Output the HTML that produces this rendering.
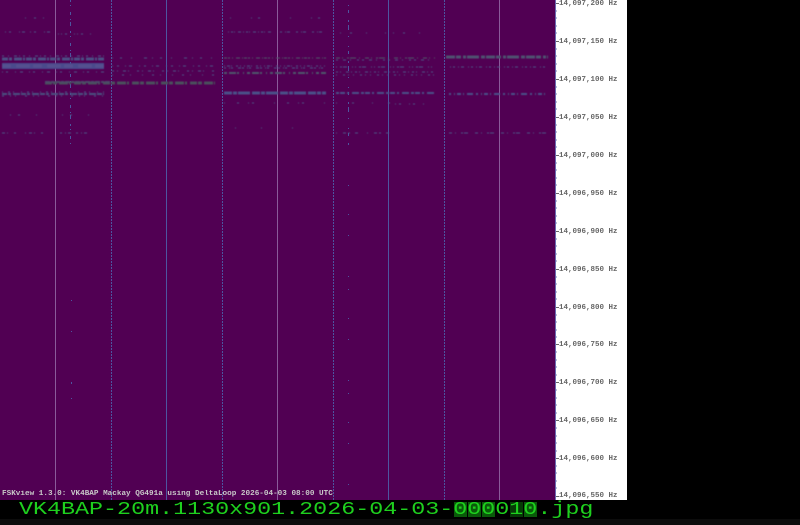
<!DOCTYPE html>
<html><head><meta charset="utf-8"><style>
html,body{margin:0;padding:0;width:800px;height:525px;overflow:hidden;background:#000}
#wf{position:absolute;left:0;top:0;width:555px;height:500px;background:#510053}
#panel{position:absolute;left:555px;top:0;width:72px;height:500px;background:#fff}
.l{position:absolute;left:559px;font:bold 7.5px/8px "Liberation Mono",monospace;color:#666;white-space:pre;filter:blur(.25px)}
#cap{position:absolute;left:2px;top:490px;font:bold 7.66px/8px "Liberation Mono",monospace;color:#c8c8c8;white-space:pre;filter:blur(.25px)}
#name{position:absolute;left:19px;top:501px;font:23.35px/22px "Liberation Mono",monospace;color:#1ed01e;white-space:pre;transform:scaleY(.8);transform-origin:0 0}
#low{position:absolute;left:0;top:519px;width:800px;height:6px;background:#0c0c0c}
.b{position:absolute;top:502px;height:15px;width:13px;background:#0a5a0a}
svg{position:absolute;left:0;top:0}
</style></head><body>
<div id="wf"></div><div id="panel"></div><div id="low"></div>
<svg width="627" height="500" fill="none" shape-rendering="crispEdges">
<g stroke-width="1">
<path d="M55.5 0V500M277.5 0V500M499.5 0V500" stroke="#8a5a9a"/>
<path d="M166.5 0V500M388.5 0V500" stroke="#4d55a0"/>
<path d="M111.5 0V500M222.5 0V500M333.5 0V500M444.5 0V500" stroke="#4d55a0" stroke-dasharray="2 1"/>
<path d="M555.5 0V500" stroke="#6a6ab0"/>
<path d="M70.5 0V145" stroke="#4d55a0" stroke-dasharray="2 3 1 6 3 4 1 2 4 5"/>
<path d="M348.5 5V145" stroke="#4d55a0" stroke-dasharray="1 4 3 7 2 3 5 6 1 9"/>
<path d="M348.5 185V490" stroke="#4d55a0" stroke-dasharray="1 28 1 20 1 40 1 12"/>
<path d="M71.5 300V400" stroke="#4d55a0" stroke-dasharray="1 30 1 50 2 14"/>
</g>
<g style="filter:blur(.4px)">
<path d="M2 66H104" stroke="#4a4a8c" stroke-width="6"/>
<path d="M2 66H104" stroke="#55508f" stroke-width="3" stroke-dasharray="9 5 14 3"/>
<path d="M45 83H215" stroke="#4a4f5c" stroke-width="3" stroke-dasharray="7 1 4 2 9 1 2 3"/>
<path d="M45 82H110" stroke="#4c4a6a" stroke-width="2" stroke-dasharray="5 1 3 1"/>
<path d="M2 94H104" stroke="#4a5080" stroke-width="2" stroke-dasharray="5 1 3 2 7 1"/>
<path d="M2 59H104" stroke="#4c4e84" stroke-width="3" stroke-dasharray="6 1 3 2 8 1 2 1"/>
<path d="M224 93H326" stroke="#4a5088" stroke-width="3" stroke-dasharray="8 1 4 1 12 2"/>
<path d="M336 93H435" stroke="#4a5088" stroke-width="2" stroke-dasharray="3 1 5 2 2 3 7 2"/>
<path d="M446 57H548" stroke="#4e5270" stroke-width="3" stroke-dasharray="9 1 5 2 3 1 12 2 4 1"/>
<path d="M449 94H548" stroke="#4a5088" stroke-width="2" stroke-dasharray="2 3 1 2 4 2 1 3 6 3"/>
<g stroke="#4d5488" stroke-width="1">
<path d="M224 58H326" stroke-dasharray="3 1 2 2 1 3 4 2 1 1" stroke="#51586a"/>
<path d="M336 58H435" stroke-dasharray="4 2 1 4 2 1 6 3 1 5" stroke="#51586a"/>
<path d="M336 60H435" stroke-dasharray="2 5 3 4 1 6 2 3"/>
<path d="M224 66H326" stroke-dasharray="1 2 3 1 1 4 2 2 1 3"/>
<path d="M224 68H326" stroke-dasharray="2 3 1 1 2 5 3 1"/>
<path d="M224 73H326" stroke-width="2" stroke-dasharray="3 2 7 1 2 4 1 3" stroke="#4d566c"/>
<path d="M336 67H435" stroke-dasharray="1 3 2 1 4 5 1 2"/>
<path d="M336 72H435" stroke-dasharray="2 2 1 5 3 2 1 3"/>
<path d="M336 75H435" stroke-dasharray="1 6 2 3 1 4"/>
<path d="M112 58H215" stroke-dasharray="1 7 2 9 1 12 3 5"/>
<path d="M112 66H215" stroke-dasharray="1 4 2 6 1 3 3 7"/>
<path d="M112 71H215" stroke-dasharray="2 3 1 5 3 2 1 8"/>
<path d="M112 75H215" stroke-dasharray="1 9 2 6 1 11"/>
<path d="M2 72H104" stroke-dasharray="1 3 2 7 1 4 3 6"/>
<path d="M2 56H104" stroke-dasharray="2 4 1 5 3 2 1 3"/>
<path d="M2 92H104" stroke-dasharray="1 5 2 3 1 7"/>
<path d="M2 96H104" stroke-dasharray="2 6 1 4 1 9"/>
<path d="M5 32H50" stroke-dasharray="1 3 2 8 1 2 3 5"/>
<path d="M58 34H92" stroke-dasharray="1 2 1 3 2 7"/>
<path d="M228 32H272" stroke-dasharray="1 2 2 1 1 3 3 2"/>
<path d="M280 32H325" stroke-dasharray="2 3 1 1 3 6"/>
<path d="M224 103H326" stroke-dasharray="1 12 2 9 1 3 2 20"/>
<path d="M340 33H435" stroke-dasharray="1 9 2 14 1 18 1 7"/>
<path d="M2 133H48" stroke-dasharray="3 2 1 6 2 9 1 3"/>
<path d="M60 133H90" stroke-dasharray="2 3 1 2 3 5"/>
<path d="M336 133H392" stroke-dasharray="1 6 3 2 2 5 3 9"/>
<path d="M449 133H548" stroke-dasharray="3 3 1 5 2 1 4 7"/>
<path d="M450 67H548" stroke-dasharray="1 2 2 3 1 2 3 4"/>
<path d="M336 103H392" stroke-dasharray="1 15 2 18"/>
<path d="M395 104H425" stroke-dasharray="1 3 2 8"/>
<path d="M10 115H100" stroke-dasharray="1 7 2 16 1 25"/>
<path d="M25 18H50" stroke-dasharray="1 8 2 7"/>
<path d="M230 18H330" stroke-dasharray="1 20 1 6 2 30"/>
<path d="M235 128H300" stroke-dasharray="1 25 1 30"/>
</g>
</g>
<g stroke="#666" stroke-width="1">
<path d="M556 3.5h3M556 41.5h3M556 79.5h3M556 117.5h3M556 155.5h3M556 193.5h3M556 231.5h3M556 269.5h3M556 307.5h3M556 344.5h3M556 382.5h3M556 420.5h3M556 458.5h3M556 496.5h3"/>
<path d="M556 11h1M556 18h1M556 26h1M556 33h1M556 49h1M556 56h1M556 64h1M556 71h1M556 87h1M556 94h1M556 102h1M556 109h1M556 125h1M556 132h1M556 140h1M556 147h1M556 163h1M556 170h1M556 178h1M556 185h1M556 201h1M556 208h1M556 216h1M556 223h1M556 239h1M556 246h1M556 254h1M556 261h1M556 277h1M556 284h1M556 292h1M556 299h1M556 315h1M556 322h1M556 330h1M556 337h1M556 352h1M556 360h1M556 367h1M556 375h1M556 390h1M556 398h1M556 405h1M556 413h1M556 428h1M556 436h1M556 443h1M556 451h1M556 466h1M556 473h1M556 481h1M556 488h1" stroke="#7a7ab0"/>
</g>
</svg>
<div class="l" style="top:0">14,097,200 Hz</div>
<div class="l" style="top:38px">14,097,150 Hz</div>
<div class="l" style="top:76px">14,097,100 Hz</div>
<div class="l" style="top:114px">14,097,050 Hz</div>
<div class="l" style="top:152px">14,097,000 Hz</div>
<div class="l" style="top:190px">14,096,950 Hz</div>
<div class="l" style="top:228px">14,096,900 Hz</div>
<div class="l" style="top:266px">14,096,850 Hz</div>
<div class="l" style="top:304px">14,096,800 Hz</div>
<div class="l" style="top:341px">14,096,750 Hz</div>
<div class="l" style="top:379px">14,096,700 Hz</div>
<div class="l" style="top:417px">14,096,650 Hz</div>
<div class="l" style="top:455px">14,096,600 Hz</div>
<div class="l" style="top:492px">14,096,550 Hz</div>
<div id="cap">FSKview 1.3.0: VK4BAP Mackay QG491a using DeltaLoop 2026-04-03 08:00 UTC</div>
<div class="b" style="left:454px"></div><div class="b" style="left:468px"></div><div class="b" style="left:482px"></div><div class="b" style="left:510px;background:#063a06"></div><div class="b" style="left:524px"></div>
<div id="name">VK4BAP-20m.1130x901.2026-04-03-000010.jpg</div>
</body></html>
